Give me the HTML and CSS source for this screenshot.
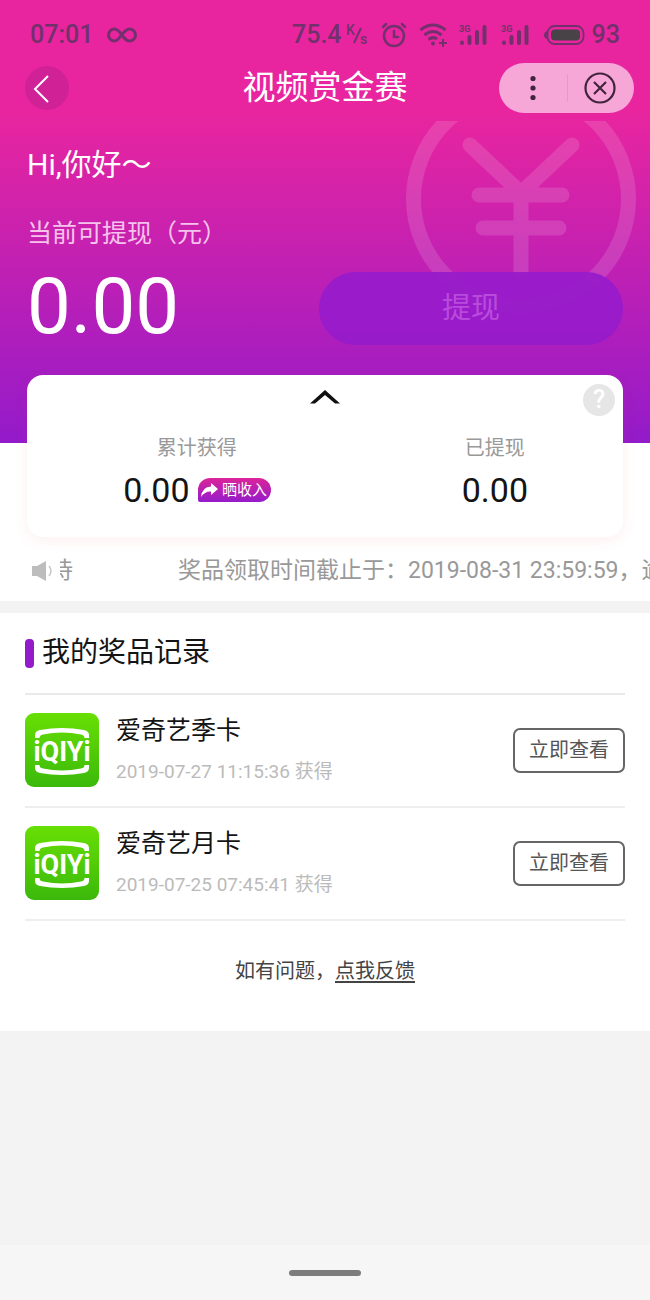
FILE: index.html
```html
<!DOCTYPE html>
<html lang="zh-CN">
<head>
<meta charset="utf-8">
<meta name="viewport" content="width=device-width, initial-scale=1">
<title>视频赏金赛</title>
<link rel="stylesheet" href="styles.css">
</head>
<body>
<svg class="defs" aria-hidden="true">
  <defs>
    <linearGradient id="green" x1="0" y1="0" x2="0" y2="1">
      <stop offset="0" stop-color="#68df03"/>
      <stop offset="1" stop-color="#3bb90b"/>
    </linearGradient>
    <symbol id="logo" viewBox="0 0 74 74">
      <rect width="74" height="74" rx="9" fill="url(#green)"/>
      <path d="M10 25V22Q10 18 15 17Q37 13 59 17Q64 18 64 22V25H59.500Q59.500 22 56 21.500Q37 17.500 18 21.500Q14.500 22 14.500 25Z" fill="#fff"/>
      <path d="M10 52V55Q10 59 15 60Q37 64 59 60Q64 59 64 55V52H59.500Q59.500 55 56 55.500Q37 59.500 18 55.500Q14.500 55 14.500 52Z" fill="#fff"/>
      <text x="37" y="48" class="logo-text">iQIYi</text>
    </symbol>
    <symbol id="signal" viewBox="0 0 30 24">
      <text x="0" y="9" class="signal-text">3G</text>
      <path d="M3 19.500V20M10.500 14V20M18 9V20M25.500 4V20" fill="none" stroke="currentColor" stroke-width="4" stroke-linecap="round"/>
    </symbol>
  </defs>
</svg>

<header class="hero">
  <svg class="yen" viewBox="0 0 232 194" aria-hidden="true">
    <g fill="none" stroke="#fff" stroke-width="15" stroke-linecap="round" opacity=".13">
      <circle cx="116" cy="78" r="107.500"/>
      <path d="M65 24L116 72L167 24M116 72V150M74 74H157M78 107H154"/>
    </g>
  </svg>

  <div class="status">
    <span class="clock">07:01</span>
    <svg class="infinity" width="30" height="18" viewBox="0 0 30 18" fill="none" stroke="currentColor" stroke-width="3" stroke-linecap="round"><path d="M15 9C12 5 10 3 7.500 3A6 6 0 0 0 7.500 15C13 15 16 3 22.500 3A6 6 0 0 1 22.500 15C20 15 18 13 16.500 11"/></svg>
    <span class="speed">75.4</span>
    <svg class="unit" width="24" height="26" viewBox="0 0 24 26"><text x="0" y="13">K</text><path d="M8 21L15 6" stroke="currentColor" stroke-width="2"/><text x="14" y="22">s</text></svg>
    <svg class="alarm" width="26" height="26" viewBox="0 0 26 26" fill="none" stroke="currentColor" stroke-width="2.500" stroke-linecap="round"><circle cx="13" cy="14" r="10"/><path d="M13 9V15H17M2 5L5 2M24 5L21 2"/></svg>
    <svg class="wifi" width="28" height="26" viewBox="0 0 28 26" fill="none" stroke="currentColor" stroke-width="3"><path d="M1.500 8Q14 -2 26.500 8M5.500 13Q14 6 22.500 13M9.500 17.500Q14 14 18 17"/><circle cx="14" cy="21.500" r="2" fill="currentColor" stroke="none"/><path d="M24 17V25M20 21H28" stroke-width="2"/></svg>
    <svg class="signal" width="30" height="24"><use href="#signal"/></svg>
    <svg class="signal" width="30" height="24"><use href="#signal"/></svg>
    <svg class="battery" width="41" height="20" viewBox="0 0 41 20"><rect x="3.500" y="1" width="36" height="18" rx="7" fill="none" stroke="currentColor" stroke-width="1.800"/><path d="M3 6Q0 7 0 10T3 14Z" fill="currentColor"/><rect x="7" y="4.500" width="29" height="11" rx="4" fill="#474347"/></svg>
    <span class="level">93</span>
  </div>

  <nav class="nav">
    <button class="back" type="button" aria-label="返回"><svg width="44" height="44" viewBox="0 0 44 44" fill="none" stroke="#fff" stroke-width="2"><path d="M23 10L10 23L23 36"/></svg></button>
    <h1 class="title">视频赏金赛</h1>
    <div class="capsule">
      <button type="button" aria-label="更多"><svg width="6" height="26" viewBox="0 0 6 26" fill="#40243c"><circle cx="3" cy="3.500" r="2.600"/><circle cx="3" cy="13" r="2.600"/><circle cx="3" cy="22.500" r="2.600"/></svg></button>
      <button type="button" aria-label="关闭"><svg width="32" height="32" viewBox="0 0 32 32" fill="none" stroke="#40243c" stroke-width="2.200"><circle cx="16" cy="16" r="14.500"/><path d="M10 10L22 22M22 10L10 22"/></svg></button>
    </div>
  </nav>

  <p class="greeting">Hi,你好～</p>
  <p class="caption">当前可提现（元）</p>
  <div class="balance">
    <strong class="amount">0.00</strong>
    <button class="withdraw" type="button">提现</button>
  </div>
</header>

<main>
  <section class="top">
    <div class="card">
      <svg class="caret" width="30" height="14" viewBox="0 0 30 14"><path d="M0 13.500L15 0L30 13.500H25L15 5L5 13.500Z" fill="#111"/></svg>
      <button class="help" type="button" aria-label="帮助">?</button>
      <dl class="stats">
        <div class="stat">
          <dt>累计获得</dt>
          <dd>0.00 <button class="share" type="button"><svg width="17" height="15" viewBox="0 0 17 15"><path d="M10 0L17 6L10 12V8.500Q4 8 0 14Q1 4 10 3.500Z" fill="#fff"/></svg>晒收入</button></dd>
        </div>
        <div class="stat">
          <dt>已提现</dt>
          <dd>0.00</dd>
        </div>
      </dl>
    </div>
    <div class="ticker">
      <svg width="22" height="22" viewBox="0 0 22 22"><path d="M0 6H5L14 1V21L5 16H0Z" fill="#bdbdbd"/><path d="M17 6Q21 11 17 16" fill="none" stroke="#c8c8c8" stroke-width="1.500"/></svg>
      <span class="tail">待</span>
      <span class="message">奖品领取时间截止于：2019-08-31 23:59:59，逾</span>
    </div>
  </section>

  <section class="records">
    <h2 class="heading">我的奖品记录</h2>
    <ul class="list">
      <li class="item">
        <svg class="logo" role="img" aria-label="爱奇艺"><use href="#logo"/></svg>
        <div class="info">
          <h3>爱奇艺季卡</h3>
          <p>2019-07-27 11:15:36 获得</p>
        </div>
        <button class="view" type="button">立即查看</button>
      </li>
      <li class="item">
        <svg class="logo" role="img" aria-label="爱奇艺"><use href="#logo"/></svg>
        <div class="info">
          <h3>爱奇艺月卡</h3>
          <p>2019-07-25 07:45:41 获得</p>
        </div>
        <button class="view" type="button">立即查看</button>
      </li>
    </ul>
    <p class="feedback">如有问题，<a href="#feedback">点我反馈</a></p>
  </section>
</main>
<footer class="gesture"><span></span></footer>
</body>
</html>
```

FILE: styles.css
```css
* { box-sizing: border-box; margin: 0; padding: 0; }

body {
  display: flex;
  flex-direction: column;
  min-height: 100vh;
  overflow-x: hidden;
  background: #f3f3f3;
  color: #141414;
  font-family: Roboto, "Noto Sans CJK SC", sans-serif;
}

button { border: 0; background: none; color: inherit; font: inherit; cursor: pointer; }
svg { display: block; flex: none; }
ul { list-style: none; }
h1, h2, h3, strong { font-weight: 400; }
.defs { position: absolute; width: 0; height: 0; }

.hero {
  position: relative;
  padding: 0 27px 98px;
  background: linear-gradient(#e8259f 0, #e8259f 113px, #931bca 100%);
  color: #fff;
}

.yen { position: absolute; top: 121px; right: 13px; width: 232px; height: 194px; }

/* Status bar */
.status {
  display: flex;
  align-items: center;
  height: 63px;
  padding: 6px 3px 0;
  color: #72316c;
  font-size: 25px;
  font-weight: 500;
}
.infinity { margin-left: 14px; }
.speed { margin-left: auto; }
.unit { margin-left: 4px; font-size: 14px; fill: currentColor; }
.alarm { margin-left: 11px; }
.wifi { margin-left: 12px; }
.signal { margin-left: 12px; }
.battery { margin-left: 13px; }
.level { margin-left: 7px; }
.signal-text { font-size: 9px; font-weight: 700; fill: currentColor; }

/* Navigation */
.nav {
  display: grid;
  grid-template-columns: 1fr auto 1fr;
  align-items: center;
  height: 50px;
  margin: 0 -11px;
}
.back { width: 44px; height: 44px; margin-left: 9px; border-radius: 50%; background: rgba(120, 20, 120, .2); }
.title { font-size: 33px; line-height: 50px; }
.capsule {
  display: flex;
  justify-self: end;
  width: 135px;
  height: 50px;
  border-radius: 25px;
  background: #f7a6d8;
}
.capsule button { display: grid; flex: 1; place-items: center; position: relative; }
.capsule button + button::before {
  content: "";
  position: absolute;
  left: 0;
  height: 28px;
  border-left: 1px solid #e79aca;
}

/* Balance */
.greeting { margin-top: 32px; font-size: 30px; line-height: 40px; }
.caption { margin-top: 29px; color: #f5c3ec; font-size: 25px; line-height: 40px; }
.balance { display: flex; align-items: flex-start; justify-content: space-between; margin-top: 18px; }
.amount { font-size: 78px; line-height: 70px; }
.withdraw {
  position: relative;
  width: 304px;
  height: 73px;
  border-radius: 37px;
  background: rgba(151, 27, 202, .93);
  color: #b94bdc;
  font-size: 29px;
  line-height: 73px;
}

/* Summary card */
.top {
  display: flow-root;
  padding: 0 27px 11px;
  border-bottom: 12px solid #f3f3f3;
  background: #fff;
}
.card {
  position: relative;
  margin-top: -68px;
  padding: 15px 0 27px;
  border-radius: 16px;
  background: #fff;
  box-shadow: 0 4px 14px rgba(240, 80, 80, .08);
}
.caret { margin: 0 auto; }
.help {
  position: absolute;
  top: 9px;
  right: 8px;
  width: 32px;
  height: 32px;
  border-radius: 50%;
  background: #e6e6e6;
  color: #fff;
  font-size: 25px;
  font-weight: 500;
  line-height: 32px;
}
.stats { display: grid; grid-template-columns: 57fr 43fr; margin-top: 29px; }
.stat { text-align: center; }
.stat dt { color: #999; font-size: 20px; line-height: 30px; }
.stat dd {
  display: flex;
  align-items: center;
  justify-content: center;
  gap: 8px;
  margin-top: 7px;
  font-size: 34px;
  line-height: 40px;
}
.share {
  display: flex;
  align-items: center;
  justify-content: center;
  gap: 4px;
  width: 73px;
  height: 24px;
  border-radius: 12px 12px 12px 2px;
  background: linear-gradient(#dc2499, #951bcb);
  color: #fff;
  font-size: 15px;
  line-height: 24px;
  white-space: nowrap;
}

/* Notice ticker */
.ticker {
  display: flex;
  align-items: center;
  margin: 16px -27px 0 0;
  padding: 0 0 1px 5px;
  overflow: hidden;
  color: #999;
  font-size: 23px;
  line-height: 36px;
  white-space: nowrap;
}
.tail { display: flex; flex: none; justify-content: flex-end; width: 13px; margin-left: 6px; overflow: hidden; }
.message { margin-left: 105px; }

/* Prize records */
.records { padding: 20px 25px 43px; background: #fff; }
.heading { display: flex; align-items: center; gap: 8px; font-size: 28px; line-height: 40px; }
.heading::before { content: ""; width: 9px; height: 29px; border-radius: 4px; background: #931bca; }
.list { margin-top: 20px; border-top: 2px solid #e9e9e9; }
.item {
  display: flex;
  align-items: center;
  padding: 18px 0 19px;
  border-bottom: 2px solid #eee;
}
.logo { width: 74px; height: 74px; }
.logo-text { font-family: Roboto, sans-serif; font-size: 27px; font-weight: 700; fill: #fff; text-anchor: middle; }
.info { flex: 1; margin-left: 17px; }
.info h3 { font-size: 25px; line-height: 36px; }
.info p { margin-top: 8px; color: #bbb; font-size: 19px; line-height: 30px; }
.view {
  width: 112px;
  height: 45px;
  border: 2px solid #666;
  border-radius: 7px;
  color: #555;
  font-size: 20px;
  line-height: 37px;
}
.feedback { margin-top: 33px; color: #444; font-size: 20px; line-height: 34px; text-align: center; }
.feedback a { color: inherit; text-underline-offset: 3px; }

/* System gesture area */
.gesture { display: flex; justify-content: center; height: 55px; margin-top: auto; padding-top: 25px; background: #f6f6f6; }
.gesture span { width: 72px; height: 6px; border-radius: 3px; background: #7d7d7d; }
```
